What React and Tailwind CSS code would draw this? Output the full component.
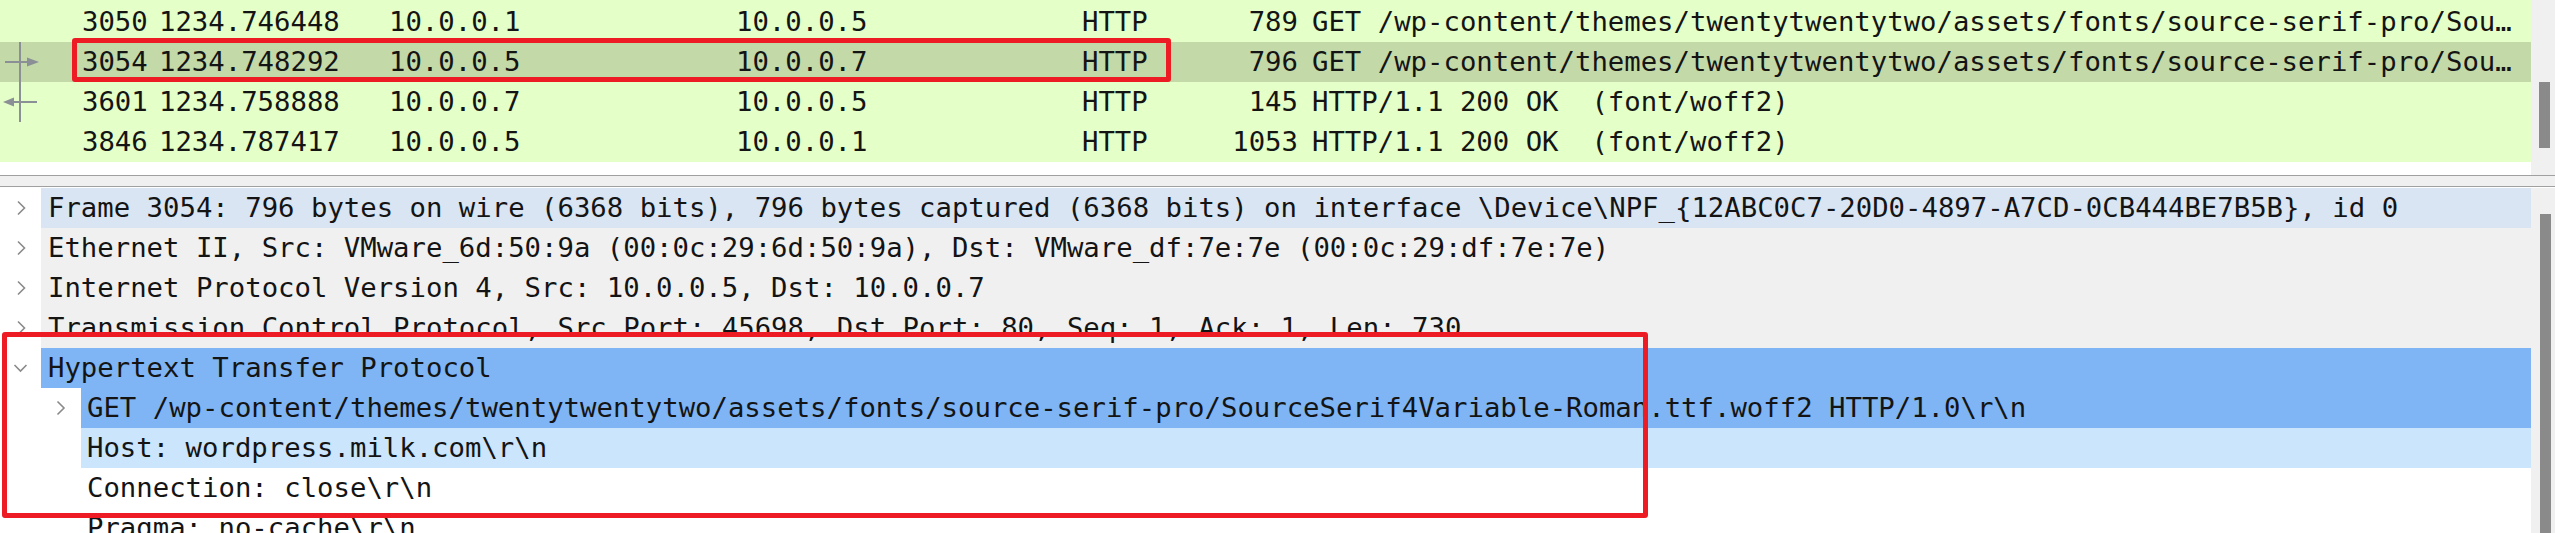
import React from 'react';

const packets = [
  { no: '3050', time: '1234.746448', src: '10.0.0.1', dst: '10.0.0.5', proto: 'HTTP', len: '789', info: 'GET /wp-content/themes/twentytwentytwo/assets/fonts/source-serif-pro/Sou…' },
  { no: '3054', time: '1234.748292', src: '10.0.0.5', dst: '10.0.0.7', proto: 'HTTP', len: '796', info: 'GET /wp-content/themes/twentytwentytwo/assets/fonts/source-serif-pro/Sou…' },
  { no: '3601', time: '1234.758888', src: '10.0.0.7', dst: '10.0.0.5', proto: 'HTTP', len: '145', info: 'HTTP/1.1 200 OK  (font/woff2)' },
  { no: '3846', time: '1234.787417', src: '10.0.0.5', dst: '10.0.0.1', proto: 'HTTP', len: '1053', info: 'HTTP/1.1 200 OK  (font/woff2)' },
];

const RequestArrow = () => (
  <svg width="82" height="40" className="block">
    <line x1="20" y1="0" x2="20" y2="40" stroke="#8b9096" strokeWidth="2" />
    <line x1="5" y1="20" x2="29" y2="20" stroke="#8b9096" strokeWidth="2" />
    <polygon points="27,15.5 39,20 27,24.5" fill="#8b9096" />
  </svg>
);

const ResponseArrow = () => (
  <svg width="82" height="40" className="block">
    <line x1="20" y1="0" x2="20" y2="40" stroke="#8b9096" strokeWidth="2" />
    <line x1="12" y1="20" x2="37" y2="20" stroke="#8b9096" strokeWidth="2" />
    <polygon points="14,15.5 3,20 14,24.5" fill="#8b9096" />
  </svg>
);

function PacketRow({ p, selected, arrow }) {
  return (
    <div className={`flex h-[40px] leading-[40px] whitespace-pre ${selected ? 'bg-[#c3d9a8]' : ''}`}>
      <div className="w-[82px] h-full shrink-0">{arrow}</div>
      <div className="w-[77px] shrink-0">{p.no}</div>
      <div className="w-[230px] shrink-0">{p.time}</div>
      <div className="w-[347px] shrink-0">{p.src}</div>
      <div className="w-[346px] shrink-0">{p.dst}</div>
      <div className="w-[108px] shrink-0">{p.proto}</div>
      <div className="w-[108px] shrink-0 text-right">{p.len}</div>
      <div className="pl-[14px] overflow-hidden">{p.info}</div>
    </div>
  );
}

const Chevron = ({ level, open }) => {
  const w = level === 0 ? 41 : 81;
  const x = level === 0 ? 18 : 57.5;
  return (
    <svg width={w} height="40" className="block">
      {open ? (
        <polyline points="14.5,17 20.5,23 26.5,17" fill="none" stroke="#8a8a8a" strokeWidth="1.6" />
      ) : (
        <polyline points={`${x},13.5 ${x + 6.5},20 ${x},26.5`} fill="none" stroke="#8a8a8a" strokeWidth="1.6" />
      )}
    </svg>
  );
};

function TreeRow({ level, chevron, open, bg, children }) {
  return (
    <div className="flex h-[40px]">
      <div className={`${level === 0 ? 'w-[41px]' : 'w-[81px]'} h-full shrink-0`}>
        {chevron && <Chevron level={level} open={open} />}
      </div>
      <div className={`flex-1 h-full leading-[40px] whitespace-pre overflow-hidden ${level === 0 ? 'pl-[7px]' : 'pl-[6px]'} ${bg}`}>
        {children}
      </div>
    </div>
  );
}

export default function App() {
  return (
    <div className="relative w-[2555px] h-[533px] overflow-hidden bg-white text-[#141414] text-[27.3px] font-['DejaVu_Sans_Mono',monospace]">
      {/* packet list */}
      <div className="flex h-[175px]">
        <div className="w-[2531px] shrink-0">
          <div className="bg-[#e4ffc7] pt-[2px]">
            <PacketRow p={packets[0]} />
            <PacketRow p={packets[1]} selected arrow={<RequestArrow />} />
            <PacketRow p={packets[2]} arrow={<ResponseArrow />} />
            <PacketRow p={packets[3]} />
          </div>
        </div>
        <div className="relative flex-1 bg-[#f0f0f0]">
          <div className="absolute left-[8px] top-[82px] w-[11px] h-[66px] bg-[#8a8a8a]" />
        </div>
      </div>

      {/* splitter */}
      <div className="h-[12px] bg-[#f0f0f0] border-y border-[#a0a0a0]" />

      {/* packet details */}
      <div className="flex pt-px">
        <div className="w-[2531px] shrink-0">
          <TreeRow level={0} chevron bg="bg-[#d9e5f2]">
            {'Frame 3054: 796 bytes on wire (6368 bits), 796 bytes captured (6368 bits) on interface \\Device\\NPF_{12ABC0C7-20D0-4897-A7CD-0CB444BE7B5B}, id 0'}
          </TreeRow>
          <TreeRow level={0} chevron bg="bg-[#f0f0f0]">
            {'Ethernet II, Src: VMware_6d:50:9a (00:0c:29:6d:50:9a), Dst: VMware_df:7e:7e (00:0c:29:df:7e:7e)'}
          </TreeRow>
          <TreeRow level={0} chevron bg="bg-[#f0f0f0]">
            {'Internet Protocol Version 4, Src: 10.0.0.5, Dst: 10.0.0.7'}
          </TreeRow>
          <TreeRow level={0} chevron bg="bg-[#f0f0f0]">
            {'Transmission Control Protocol, Src Port: 45698, Dst Port: 80, Seq: 1, Ack: 1, Len: 730'}
          </TreeRow>
          <TreeRow level={0} chevron open bg="bg-[#7fb5f5]">
            {'Hypertext Transfer Protocol'}
          </TreeRow>
          <TreeRow level={1} chevron bg="bg-[#7fb5f5]">
            {'GET /wp-content/themes/twentytwentytwo/assets/fonts/source-serif-pro/SourceSerif4Variable-Roman.ttf.woff2 HTTP/1.0\\r\\n'}
          </TreeRow>
          <TreeRow level={1} bg="bg-[#cbe5fc]">
            {'Host: wordpress.milk.com\\r\\n'}
          </TreeRow>
          <TreeRow level={1} bg="">
            {'Connection: close\\r\\n'}
          </TreeRow>
          <TreeRow level={1} bg="">
            {'Pragma: no-cache\\r\\n'}
          </TreeRow>
        </div>
        <div className="relative flex-1 h-[346px] bg-[#f0f0f0]">
          <div className="absolute left-[9px] top-[26px] w-[11px] h-[400px] bg-[#8a8a8a]" />
        </div>
      </div>

      {/* annotation boxes */}
      <div className="absolute left-[72px] top-[38px] w-[1099px] h-[44px] border-[5px] border-[#ed1c24] rounded-[3px]" />
      <div className="absolute left-[2px] top-[332px] w-[1646px] h-[186px] border-[5px] border-[#ed1c24] rounded-[3px]" />
    </div>
  );
}
